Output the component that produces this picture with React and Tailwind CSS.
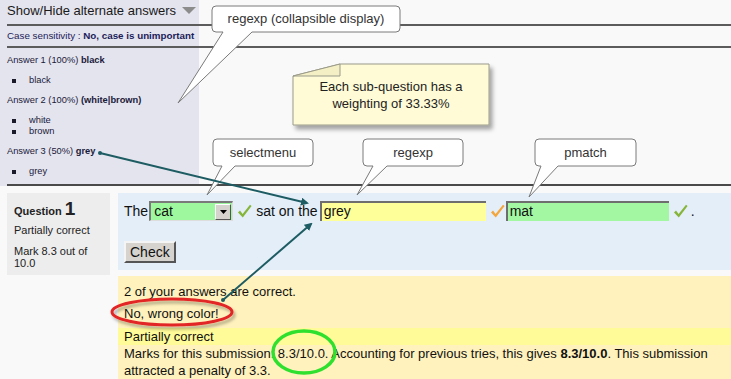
import React from 'react';

function Tick({ color }) {
  return (
    <svg width="15" height="15" viewBox="0 0 15 15" className="shrink-0">
      <path d="M1 8.5 L3 6.6 L5.6 10 L13 0.8 L14.6 2 L5.8 13.6 Z" fill={color} />
    </svg>
  );
}

function Answer({ label, pct, value, items }) {
  return (
    <div className="mt-[8px] first:mt-0">
      <div className="leading-[12px]">
        Answer {label} ({pct}) <b>{value}</b>
      </div>
      <ul className="mt-[9px]">
        {items.map((it) => (
          <li key={it} className="flex items-center leading-[11px]">
            <span className="w-[4px] h-[4px] bg-[#1a1a2a] ml-[5px] mr-[13px]" />
            {it}
          </li>
        ))}
      </ul>
    </div>
  );
}

function Overlay() {
  return (
    <svg className="absolute inset-0 pointer-events-none" width="731" height="379">
      <defs>
        <filter id="sh" x="-10%" y="-10%" width="130%" height="140%">
          <feDropShadow dx="3" dy="4" stdDeviation="2" floodColor="#000" floodOpacity="0.35" />
        </filter>
        <filter id="sh2" x="-10%" y="-20%" width="130%" height="150%">
          <feDropShadow dx="2" dy="3" stdDeviation="1.5" floodColor="#000" floodOpacity="0.3" />
        </filter>
        <marker id="ah" markerWidth="8" markerHeight="8" refX="6" refY="4" orient="auto" markerUnits="userSpaceOnUse">
          <path d="M0,0 L8,4 L0,8 Z" fill="#1d5c62" />
        </marker>
      </defs>

      {/* callout: regexp (collapsible display) */}
      <path
        d="M216,6 H396 Q400,6 400,10 V28 Q400,32 396,32 H252 L178,103 L223,32 H216 Q212,32 212,28 V10 Q212,6 216,6 Z"
        fill="#fff"
        stroke="#7a7a7a"
      />

      {/* sticky note */}
      <g filter="url(#sh)">
        <path d="M340,64 H489 V125 H293 V76 Z" fill="#fffbd6" stroke="#9a9a8a" />
      </g>
      <path d="M293,76 L340,64 V76 Z" fill="#f4efc4" stroke="#9a9a8a" />

      {/* small callouts */}
      <path
        d="M217,139 H309 Q313,139 313,143 V162 Q313,166 309,166 H235 L207,195 L222,166 H217 Q213,166 213,162 V143 Q213,139 217,139 Z"
        fill="#fff"
        stroke="#7a7a7a"
      />
      <path
        d="M367,139 H459 Q463,139 463,143 V162 Q463,166 459,166 H387 L357,195 L373,166 H367 Q363,166 363,162 V143 Q363,139 367,139 Z"
        fill="#fff"
        stroke="#7a7a7a"
      />
      <path
        d="M539,139 H632 Q636,139 636,143 V162 Q636,166 632,166 H558 L529,197 L541,166 H539 Q535,166 535,162 V143 Q535,139 539,139 Z"
        fill="#fff"
        stroke="#7a7a7a"
      />

      {/* arrows */}
      <circle cx="100" cy="153" r="2" fill="#1d5c62" />
      <line x1="100" y1="153" x2="307" y2="203" stroke="#1d5c62" strokeWidth="2" markerEnd="url(#ah)" />
      <circle cx="223" cy="300" r="2" fill="#1d5c62" />
      <line x1="223" y1="300" x2="311" y2="224" stroke="#1d5c62" strokeWidth="2" markerEnd="url(#ah)" />

      {/* highlight ellipses */}
      <g filter="url(#sh2)">
        <ellipse cx="172" cy="312" rx="60" ry="13" fill="none" stroke="#e22626" strokeWidth="3" />
      </g>
      <ellipse cx="304" cy="352" rx="31" ry="21" fill="none" stroke="#2fe02f" strokeWidth="3.5" />
    </svg>
  );
}

export default function App() {
  return (
    <div className="relative w-[731px] h-[379px] overflow-hidden bg-[#f9f9f9] font-['Liberation_Sans',Arial,sans-serif] text-[#111]">
      {/* alternate answers panel */}
      <div className="bg-[linear-gradient(to_right,#e4e4ee_199px,transparent_199px)] pl-[7px]">
        <div className="h-[26px] flex items-center border-b-2 border-[#5c5c5c] text-[13px] text-[#1a1a1a] pb-[2px]">
          Show/Hide alternate answers
          <svg width="14" height="8" viewBox="0 0 14 8" className="ml-[6px]">
            <path d="M0,0 H14 L7,7 Z" fill="#8c8c8c" />
          </svg>
        </div>
        <div className="h-[22px] flex items-center border-b-2 border-[#5c5c5c] text-[9.8px] text-[#1c1c5a]">
          Case sensitivity :&nbsp;<b>No, case is unimportant</b>
        </div>
        <div className="h-[138px] pt-[6px] border-b-2 border-[#4a4a4a] text-[9.3px] text-[#1a1a3a]">
          <div className="w-[192px]">
            <Answer label="1" pct="100%" value="black" items={['black']} />
            <Answer label="2" pct="100%" value="(white|brown)" items={['white', 'brown']} />
            <Answer label="3" pct="50%" value="grey" items={['grey']} />
          </div>
        </div>
      </div>

      {/* question */}
      <div className="flex gap-[8px] pl-[7px] pt-[7px]">
        <div className="w-[103px] h-[82px] bg-[#ededed] pl-[7px] pt-[7px] text-[11px] text-[#222]">
          <div className="flex items-baseline font-bold leading-[18px]">
            Question <span className="text-[19px] ml-[3px]">1</span>
          </div>
          <div className="mt-[4px] leading-[13px]">Partially correct</div>
          <div className="mt-[8px] leading-[12px]">
            Mark 8.3 out of
            <br />
            10.0
          </div>
        </div>

        <div className="flex-1 flex flex-col">
          <div className="h-[77px] bg-[#e3eef9] pl-[6px] pt-[8px] text-[14px]">
            <div className="flex items-center h-[20px]">
              <span>The</span>
              <div className="ml-[1px] w-[84px] h-[20px] flex border-t-2 border-l-2 border-[#7a7a7a] border-b border-r border-b-[#ddd] border-r-[#ddd] bg-[#9ef99e]">
                <span className="flex-1 pl-[3px] leading-[17px]">cat</span>
                <div className="w-[16px] h-[16px] my-auto mr-[1px] bg-[#d6d3ce] border border-t-white border-l-white border-b-[#555] border-r-[#555] flex items-center justify-center">
                  <svg width="7" height="4" viewBox="0 0 7 4">
                    <path d="M0,0 H7 L3.5,4 Z" fill="#000" />
                  </svg>
                </div>
              </div>
              <span className="ml-[4px]"><Tick color="#86b53a" /></span>
              <span className="ml-[4px]">sat on the</span>
              <div className="ml-[2px] w-[166px] h-[20px] bg-[#ffff99] border-t-2 border-l-2 border-[#6e6e6e] pl-[2px] leading-[17px]">
                grey
              </div>
              <span className="ml-[4px]"><Tick color="#f4a53c" /></span>
              <div className="ml-[1px] w-[163px] h-[20px] bg-[#a3f7a3] border-t-2 border-l-2 border-[#6e6e6e] pl-[2px] leading-[17px]">
                mat
              </div>
              <span className="ml-[4px]"><Tick color="#86b53a" /></span>
              <span className="ml-[3px]">.</span>
            </div>
            <button className="mt-[20px] h-[22px] px-[4px] bg-[#d6d3ce] border-2 border-t-[#f4f4f4] border-l-[#f4f4f4] border-b-[#555] border-r-[#555] text-[14px] leading-[16px] text-[#111]">
              Check
            </button>
          </div>

          <div className="mt-[6px] h-[120px] bg-[#fff2bd] pt-[7px] text-[13px] leading-[17px] text-[#111]">
            <div className="pl-[6px]">2 of your answers are correct.</div>
            <div className="pl-[6px] mt-[5px]">No, wrong color!</div>
            <div className="mt-[6px] bg-[linear-gradient(#fffb98_0,#fffb98_17px,transparent_17px)] pl-[6px]">
              <div>Partially correct</div>
              <div>
                Marks for this submission: 8.3/10.0. Accounting for previous tries, this gives <b>8.3/10.0</b>. This submission
                attracted a penalty of 3.3.
              </div>
            </div>
          </div>
        </div>
      </div>

      <Overlay />

      {/* callout labels */}
      <div className="absolute left-[212px] top-[6px] w-[188px] h-[26px] flex items-center justify-center text-[13px] text-[#333]">
        regexp (collapsible display)
      </div>
      <div className="absolute left-[293px] top-[64px] w-[196px] h-[61px] flex flex-col items-center justify-center text-[13px] leading-[17px] text-[#222]">
        <span>Each sub-question has a</span>
        <span>weighting of 33.33%</span>
      </div>
      <div className="absolute left-[213px] top-[139px] w-[100px] h-[27px] flex items-center justify-center text-[13px] text-[#333]">
        selectmenu
      </div>
      <div className="absolute left-[363px] top-[139px] w-[100px] h-[27px] flex items-center justify-center text-[13px] text-[#333]">
        regexp
      </div>
      <div className="absolute left-[535px] top-[139px] w-[101px] h-[27px] flex items-center justify-center text-[13px] text-[#333]">
        pmatch
      </div>
    </div>
  );
}
